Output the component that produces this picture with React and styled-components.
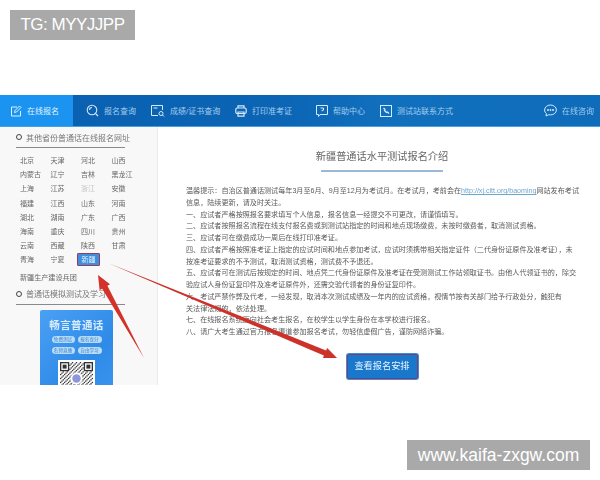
import styled, { createGlobalStyle } from "styled-components";

const cjk = `"Liberation Sans", "Noto Sans CJK SC", sans-serif`;

const GlobalStyle = createGlobalStyle`
  html, body {
    margin: 0;
    padding: 0;
    background: #fff;
    font-family: ${cjk};
  }
`;

const Page = styled.div`
  position: relative;
  width: 600px;
  height: 480px;
  padding-top: 95px;
  box-sizing: border-box;
  overflow: hidden;
  background: #fff;
`;

const Watermark = styled.div`
  position: absolute;
  height: 30px;
  line-height: 30px;
  background: #a9a9a9;
  color: #fff;
  font-size: ${({ $size }) => $size}px;
  text-align: center;
  white-space: nowrap;
  box-sizing: border-box;
  ${({ $top }) =>
    $top
      ? "left: 10px; top: 10px; width: 125px; letter-spacing: -0.5px;"
      : "left: 407px; top: 440px; width: 183px;"}
`;

const Shot = styled.div`
  position: relative;
  height: 290px;
  overflow: hidden;
  filter: blur(0.45px);
`;

const Nav = styled.div`
  display: flex;
  align-items: center;
  height: 32px;
  box-sizing: border-box;
  border-bottom: 1px solid #4a9fe0;
  background: linear-gradient(90deg, #0a60b0 0%, #0b64b4 45%, #1170bd 65%, #0e6cba 100%);
`;

const NavItem = styled.div`
  display: flex;
  align-items: center;
  gap: 5px;
  height: 100%;
  flex: none;
  width: ${({ $w }) => $w}px;
  padding-left: ${({ $pad }) => $pad}px;
  box-sizing: border-box;
  color: ${({ $active }) => ($active ? "#e3f3ff" : "#a3cdec")};
  background: ${({ $active }) => ($active ? "#1a94f0" : "transparent")};
  font-size: 8px;
  white-space: nowrap;
  svg {
    flex: none;
  }
`;

const NavRight = styled(NavItem)`
  margin-left: auto;
`;

const Body = styled.div`
  display: flex;
  height: 258px;
`;

const Sidebar = styled.aside`
  width: 158px;
  flex: none;
  background: #f8f8f9;
  border-right: 1px solid #ececec;
  box-sizing: border-box;
  padding: 5px 0 0 16px;
`;

const SideHeading = styled.div`
  display: flex;
  align-items: center;
  gap: 4px;
  width: 109px;
  height: 10px;
  padding-bottom: 5px;
  white-space: nowrap;
  font-size: 8px;
  color: #777;
  border-bottom: 1px solid #8a8a8a;
  margin-top: ${({ $mt }) => $mt || 0}px;
  &::before {
    content: "";
    width: 4px;
    height: 4px;
    flex: none;
    border: 1px solid #444;
    border-radius: 50%;
  }
`;

const Provinces = styled.div`
  display: grid;
  grid-template-columns: repeat(4, 30.5px);
  grid-auto-rows: 14.2px;
  margin: 5px 0 0 4px;
  font-size: 7px;
  color: #666;
  align-items: center;
`;

const Province = styled.span`
  color: ${({ $dim }) => ($dim ? "#c4c4c4" : "#666")};
  white-space: nowrap;
  ${({ $on }) =>
    $on &&
    `
    justify-self: start;
    width: 23px;
    height: 13px;
    line-height: 11px;
    box-sizing: border-box;
    margin-left: -4px;
    text-align: center;
    color: #dff0ff;
    background: #3d8fdc;
    border: 1px solid #9c3a5c;
    border-radius: 1px;
  `}
`;

const CorpsLink = styled.div`
  margin: 4px 0 0 4px;
  height: 14px;
  line-height: 14px;
  font-size: 7.1px;
  color: #666;
`;

const PromoCard = styled.div`
  width: 73px;
  height: 90px;
  margin: 5px 0 0 24px;
  padding-top: 8px;
  box-sizing: border-box;
  border-radius: 2px;
  background: linear-gradient(135deg, #4aa0f4 0%, #2f8be8 60%, #3a95ee 100%);
  display: flex;
  flex-direction: column;
  align-items: center;
`;

const PromoTitle = styled.div`
  font-size: 10.5px;
  letter-spacing: 0.4px;
  color: #d8ecff;
  font-weight: 700;
  line-height: 14px;
`;

const Pills = styled.div`
  display: grid;
  grid-template-columns: 23px 24px;
  gap: 4px 3px;
  margin-top: 4.5px;
`;

const Pill = styled.span`
  height: 7px;
  line-height: 7px;
  border-radius: 4px;
  background: #b9dcf8;
  color: #3f86cf;
  font-size: 4.6px;
  text-align: center;
  white-space: nowrap;
`;

const QrBox = styled.div`
  width: 37px;
  height: 37px;
  margin-top: 5.5px;
  background: #fff;
  padding: 2px;
  box-sizing: border-box;
`;

const Main = styled.main`
  flex: 1;
  padding: 22px 22px 0 28px;
  min-width: 0;
`;

const Title = styled.h1`
  margin: 0;
  font-size: 10.2px;
  line-height: 16px;
  font-weight: 400;
  color: #666;
  text-align: center;
  white-space: nowrap;
`;

const TitleRule = styled.div`
  width: 122px;
  height: 2px;
  margin: 5px auto 0;
  background: #9bb8d6;
`;

const Article = styled.div`
  margin-top: 14px;
  font-size: 7.1px;
  line-height: 11.75px;
  color: #5a5a5a;
`;

const Line = styled.div`
  white-space: nowrap;
`;

const Link = styled.span`
  color: #6fa6cf;
  text-decoration: underline;
`;

const ButtonRow = styled.div`
  display: flex;
  justify-content: center;
  margin-top: 15px;
`;

const ApplyButton = styled.div`
  width: 71px;
  height: 25px;
  line-height: 23px;
  box-sizing: border-box;
  text-align: center;
  font-size: 9.2px;
  color: #e8f5ff;
  background: #1a78cc;
  border: 1px solid #7a3f72;
  border-radius: 2px;
  box-shadow: 0 0 0 1px #3f8fd8;
`;

const ArrowLayer = styled.svg`
  position: absolute;
  left: 0;
  top: 0;
  pointer-events: none;
`;

const provinces = [
  "北京", "天津", "河北", "山西",
  "内蒙古", "辽宁", "吉林", "黑龙江",
  "上海", "江苏", "浙江", "安徽",
  "福建", "江西", "山东", "河南",
  "湖北", "湖南", "广东", "广西",
  "海南", "重庆", "四川", "贵州",
  "云南", "西藏", "陕西", "甘肃",
  "青海", "宁夏", "新疆",
];

const lines = [
  <>温馨提示：自治区普通话测试每年3月至6月、9月至12月为考试月。在考试月，考前会在<Link>http://xj.cltt.org/baoming</Link>网站发布考试</>,
  "信息，陆续更新，请及时关注。",
  "一、应试者严格按照报名要求填写个人信息，报名信息一经提交不可更改，请谨慎填写。",
  "二、应试者按照报名流程在线支付报名费或到测试站指定的时间和地点现场缴费，未按时缴费者，取消测试资格。",
  "三、应试者可在缴费成功一周后在线打印准考证。",
  "四、应试者严格按照准考证上指定的应试时间和地点参加考试，应试时须携带相关指定证件（二代身份证原件及准考证），未",
  "按准考证要求的不予测试，取消测试资格，测试费不予退还。",
  "五、应试者可在测试后按规定的时间、地点凭二代身份证原件及准考证在受测测试工作站领取证书。由他人代领证书的，除交",
  "验应试人身份证复印件及准考证原件外，还需交验代领者的身份证复印件。",
  "六、考试严禁作弊及代考，一经发现，取消本次测试成绩及一年内的应试资格，视情节按有关部门给予行政处分，触犯有",
  "关法律法规的，依法处理。",
  "七、在线报名系统面向社会考生报名，在校学生以学生身份在本学校进行报名。",
  "八、请广大考生通过官方报名渠道参加报名考试，勿轻信虚假广告，谨防网络诈骗。",
];

const EditIcon = () => (
  <svg width="12" height="12" viewBox="0 0 12 12" fill="none" stroke="#dff1ff" strokeWidth="1">
    <path d="M7 2H1.500v9h9V6" />
    <path d="M4.500 7.500 5 5.500 9.500 1l1.500 1.500-4.500 4.500z" />
  </svg>
);

const SearchIcon = () => (
  <svg width="13" height="13" viewBox="0 0 13 13" fill="none" stroke="#d5eafa" strokeWidth="1.100">
    <circle cx="6" cy="6" r="4.800" />
    <path d="M3.500 6a2.500 2.500 0 0 1 2.500-2.500" />
    <path d="M9.500 9.500 12 12" />
  </svg>
);

const CertIcon = () => (
  <svg width="14" height="12" viewBox="0 0 14 12" fill="none" stroke="#d5eafa" strokeWidth="1">
    <path d="M7 10.500H.5v-10h11V5" />
    <path d="M2.500 3h4" />
    <circle cx="10" cy="8.500" r="2" />
    <path d="m11.500 10 1.500 1.500" />
  </svg>
);

const PrintIcon = () => (
  <svg width="12" height="12" viewBox="0 0 12 12" fill="none" stroke="#d5eafa" strokeWidth="1.200">
    <path d="M3 3V.8h6V3" />
    <rect x=".8" y="3" width="10.400" height="5.500" rx="1.500" />
    <path d="M3 7h6v4.200H3z" />
  </svg>
);

const HelpIcon = () => (
  <svg width="12" height="12" viewBox="0 0 12 12" fill="none" stroke="#d5eafa" strokeWidth="1">
    <path d="M.5.500h11v9H4l-1.500 2v-2h-2z" />
    <path d="M4.500 3h3v2.200H6v1" />
  </svg>
);

const PhoneIcon = () => (
  <svg width="12" height="12" viewBox="0 0 12 12" fill="none" stroke="#d5eafa" strokeWidth="1">
    <rect x=".5" y=".5" width="11" height="11" />
    <path d="M3.500 3 5 4.500 4.500 5.500 6.500 7.500 7.500 7 9 8.500" strokeWidth="1.300" />
  </svg>
);

const ChatIcon = () => (
  <svg width="13" height="13" viewBox="0 0 13 13" fill="none" stroke="#d5eafa" strokeWidth="1">
    <path d="M6.500 1C3.200 1 .6 3.200.6 6c0 1.400.7 2.700 1.800 3.600L2 12l2.700-1.300c.6.100 1.200.200 1.800.200 3.300 0 5.900-2.200 5.900-4.900S9.800 1 6.500 1z" />
    <circle cx="4" cy="6" r=".6" fill="#d5eafa" />
    <circle cx="6.500" cy="6" r=".6" fill="#d5eafa" />
    <circle cx="9" cy="6" r=".6" fill="#d5eafa" />
  </svg>
);

// fake but stable module pattern for the qr code
const qrCells = [];
for (let y = 0; y < 25; y++) {
  for (let x = 0; x < 25; x++) {
    const finder = (x < 7 && y < 7) || (x > 17 && y < 7) || (x < 7 && y > 17);
    if (finder) continue;
    if ((x * 7 + y * 13 + ((x * y) % 5) * 3) % 3 === 0) qrCells.push([x, y]);
  }
}

const QrCode = () => (
  <svg width="33" height="33" viewBox="0 0 25 25">
    {qrCells.map(([x, y]) => (
      <rect key={`${x}-${y}`} x={x} y={y} width="1" height="1" fill="#333" />
    ))}
    {[[0, 0], [18, 0], [0, 18]].map(([x, y]) => (
      <g key={`${x}-${y}`}>
        <rect x={x + 0.5} y={y + 0.5} width="6" height="6" fill="none" stroke="#333" />
        <rect x={x + 2} y={y + 2} width="3" height="3" fill="#333" />
      </g>
    ))}
    <circle cx="12.500" cy="12.500" r="4.500" fill="#fff" />
    <circle cx="12.500" cy="12.500" r="3.200" fill="#8f96e0" />
  </svg>
);

export default function App() {
  return (
    <>
      <GlobalStyle />
      <Page>
        <Watermark $top $size={17}>TG: MYYJJPP</Watermark>
        <Shot>
          <Nav>
            <NavItem $active $w={73} $pad={10}><EditIcon />在线报名</NavItem>
            <NavItem $w={78} $pad={13}><SearchIcon />报名查询</NavItem>
            <NavItem $w={84} $pad={0}><CertIcon />成绩/证书查询</NavItem>
            <NavItem $w={81} $pad={0}><PrintIcon />打印准考证</NavItem>
            <NavItem $w={64} $pad={0}><HelpIcon />帮助中心</NavItem>
            <NavItem $w={90} $pad={0}><PhoneIcon />测试站联系方式</NavItem>
            <NavRight $w={56} $pad={0}><ChatIcon />在线咨询</NavRight>
          </Nav>
          <Body>
            <Sidebar>
              <SideHeading>其他省份普通话在线报名网址</SideHeading>
              <Provinces>
                {provinces.map((name) => (
                  <Province key={name} $dim={name === "浙江"} $on={name === "新疆"}>{name}</Province>
                ))}
              </Provinces>
              <CorpsLink>新疆生产建设兵团</CorpsLink>
              <SideHeading $mt={4}>普通话模拟测试及学习</SideHeading>
              <PromoCard>
                <PromoTitle>畅言普通话</PromoTitle>
                <Pills>
                  <Pill>免费测试</Pill>
                  <Pill>报名查分</Pill>
                  <Pill>名师直播</Pill>
                  <Pill>自由学习</Pill>
                </Pills>
                <QrBox><QrCode /></QrBox>
              </PromoCard>
            </Sidebar>
            <Main>
              <Title>新疆普通话水平测试报名介绍</Title>
              <TitleRule />
              <Article>
                {lines.map((line, i) => (
                  <Line key={i}>{line}</Line>
                ))}
              </Article>
              <ButtonRow>
                <ApplyButton>查看报名安排</ApplyButton>
              </ButtonRow>
            </Main>
          </Body>
          <ArrowLayer width="600" height="290" viewBox="0 95 600 290">
            <polygon points="98,275 110,284.300 107.400,285.700 144,358 102.200,288.700 99.600,290.100" fill="#d2322a" />
            <polygon points="337,358 327.100,347.900 326.100,350.400 108,263 323.900,355.600 322.900,358.100" fill="#cc322a" />
          </ArrowLayer>
        </Shot>
        <Watermark $size={17.500}>www.kaifa-zxgw.com</Watermark>
      </Page>
    </>
  );
}
